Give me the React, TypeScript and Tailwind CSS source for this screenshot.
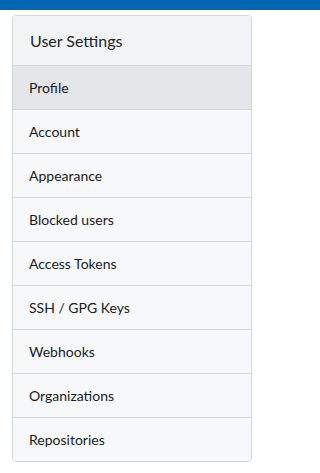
const items = [
  "Profile",
  "Account",
  "Appearance",
  "Blocked users",
  "Access Tokens",
  "SSH / GPG Keys",
  "Webhooks",
  "Organizations",
  "Repositories",
];

export default function App() {
  return (
    <div className="w-full min-h-screen bg-white overflow-hidden" style={{ fontFamily: 'Lato, "Noto Sans", sans-serif' }}>
      <div className="h-[10px] bg-[#0366b3]" />
      <div className="pl-[12px] pr-[13px] pt-[5px] w-[265px]">
        <div className="rounded-[4px] border border-[#d0d7de] overflow-hidden">
          <div className="h-[49px] flex items-center px-[17px] bg-[#f2f3f5] text-[16px] text-[#202327]">
            User Settings
          </div>
          <ul className="bg-[#f7f8fa]">
            {items.map((label, i) => (
              <li
                key={label}
                className={
                  "h-[44px] flex items-center px-[16px] text-[14px] text-[#181c21] border-t border-[#d0d7de] " +
                  (i === 0 ? "bg-[#e4e6ea]" : "")
                }
              >
                {label}
              </li>
            ))}
          </ul>
        </div>
      </div>
    </div>
  );
}
